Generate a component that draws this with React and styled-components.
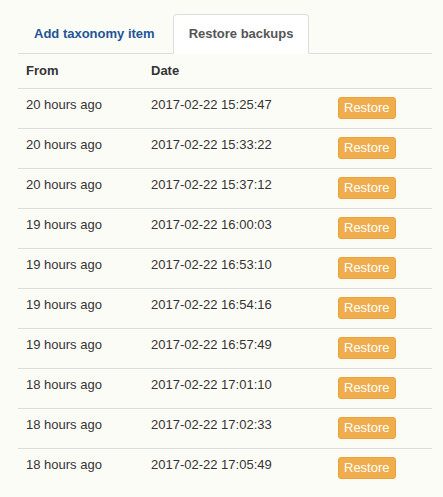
import React from 'react'
import styled, { createGlobalStyle, css } from 'styled-components'

const GlobalStyle = createGlobalStyle`
  html, body {
    margin: 0;
    padding: 0;
    background: #fcfcf7;
  }
  body {
    font-family: "Liberation Sans", Arial, Helvetica, sans-serif;
    font-size: 13px;
    color: #333;
  }
`

const backups = [
  { from: '20 hours ago', date: '2017-02-22 15:25:47' },
  { from: '20 hours ago', date: '2017-02-22 15:33:22' },
  { from: '20 hours ago', date: '2017-02-22 15:37:12' },
  { from: '19 hours ago', date: '2017-02-22 16:00:03' },
  { from: '19 hours ago', date: '2017-02-22 16:53:10' },
  { from: '19 hours ago', date: '2017-02-22 16:54:16' },
  { from: '19 hours ago', date: '2017-02-22 16:57:49' },
  { from: '18 hours ago', date: '2017-02-22 17:01:10' },
  { from: '18 hours ago', date: '2017-02-22 17:02:33' },
  { from: '18 hours ago', date: '2017-02-22 17:05:49' }
]

class App extends React.Component {
  constructor(props) {
    super(props)
    this.state = {
      tab: 'restore'
    }
  }

  render() {
    let { tab } = this.state
    return (
      <Page>
        <GlobalStyle />
        <Tabs>
          <Tab active={tab === 'add'} onClick={() => this.setState({ tab: 'add' })}>
            Add taxonomy item
          </Tab>
          <Tab active={tab === 'restore'} onClick={() => this.setState({ tab: 'restore' })}>
            Restore backups
          </Tab>
        </Tabs>
        <Table>
          <colgroup>
            <col style={{ width: '125px' }} />
            <col style={{ width: '187px' }} />
            <col />
          </colgroup>
          <thead>
            <tr>
              <Th>From</Th>
              <Th>Date</Th>
              <Th />
            </tr>
          </thead>
          <tbody>
            {backups.map((item, i) => (
              <Row key={i} last={i === backups.length - 1}>
                <Td>{item.from}</Td>
                <Td>{item.date}</Td>
                <ActionTd>
                  <RestoreButton>Restore</RestoreButton>
                </ActionTd>
              </Row>
            ))}
          </tbody>
        </Table>
      </Page>
    )
  }
}

const Page = styled.div`
  padding: 14px 11px 0 18px;
`

const Tabs = styled.div`
  display: flex;
  border-bottom: 1px solid #ddd;
`

const Tab = styled.div`
  margin-right: 2px;
  margin-bottom: -1px;
  padding: 10px 15px;
  border: 1px solid transparent;
  border-radius: 4px 4px 0 0;
  font-size: 13px;
  font-weight: bold;
  line-height: 18px;
  color: #1f5596;
  cursor: pointer;
  ${props => props.active
    && css`
      background: #fff;
      border-color: #ddd;
      border-bottom-color: transparent;
      color: #555;
    `
  }
`

const Table = styled.table`
  width: 100%;
  border-collapse: collapse;
  table-layout: fixed;
`

const Th = styled.th`
  padding: 8px;
  line-height: 18px;
  text-align: left;
  font-weight: bold;
  border-bottom: 1px solid #ddd;
`

const Row = styled.tr`
  border-bottom: 1px solid #ddd;
  ${props => props.last
    && css`border-bottom: none;`
  }
`

const Td = styled.td`
  padding: 7px 8px;
  line-height: 18px;
  vertical-align: top;
`

const ActionTd = styled.td`
  padding: 8px 8px 9px;
  vertical-align: top;
`

const RestoreButton = styled.button`
  display: inline-block;
  padding: 1px 5px;
  border: 1px solid #eea236;
  border-radius: 3px;
  background: #f0ad4e;
  color: #fff;
  font-family: "Liberation Sans", Arial, Helvetica, sans-serif;
  font-size: 13px;
  line-height: 18px;
  cursor: pointer;
`

export default App
